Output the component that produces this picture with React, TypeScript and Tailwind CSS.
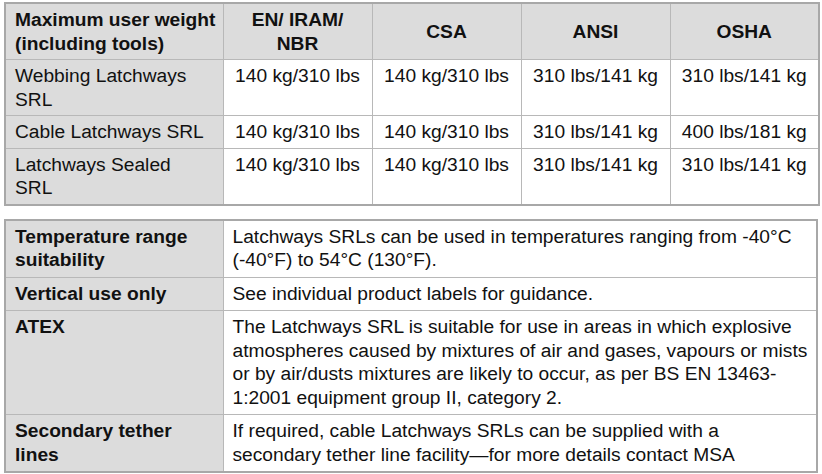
const weights = [
  { name: ["Webbing Latchways", "SRL"], v: ["140 kg/310 lbs", "140 kg/310 lbs", "310 lbs/141 kg", "310 lbs/141 kg"] },
  { name: ["Cable Latchways SRL"], v: ["140 kg/310 lbs", "140 kg/310 lbs", "310 lbs/141 kg", "400 lbs/181 kg"] },
  { name: ["Latchways Sealed", "SRL"], v: ["140 kg/310 lbs", "140 kg/310 lbs", "310 lbs/141 kg", "310 lbs/141 kg"] },
];

const specs = [
  {
    label: ["Temperature range", "suitability"],
    text: ["Latchways SRLs can be used in temperatures ranging from -40°C", "(-40°F) to 54°C (130°F)."],
  },
  { label: ["Vertical use only"], text: ["See individual product labels for guidance."] },
  {
    label: ["ATEX"],
    text: [
      "The Latchways SRL is suitable for use in areas in which explosive",
      "atmospheres caused by mixtures of air and gases, vapours or mists",
      "or by air/dusts mixtures are likely to occur, as per BS EN 13463-",
      "1:2001 equipment group II, category 2.",
    ],
  },
  {
    label: ["Secondary tether", "lines"],
    text: ["If required, cable Latchways SRLs can be supplied with a", "secondary tether line facility\u2014for more details contact MSA"],
  },
];

const Lines = ({ lines }: { lines: string[] }) => (
  <>
    {lines.map((l, i) => (
      <span key={i} className="block h-[23.5px] whitespace-nowrap">
        {l}
      </span>
    ))}
  </>
);

const cell = "border border-[#b8b8b8] px-[9px] pt-[4px] pb-[4px] align-top";
const cell2 = "border border-[#b8b8b8] px-[9px] pt-[4px] pb-[5px] align-top";

export default function App() {
  return (
    <div
      className="w-[822px] h-[474px] overflow-hidden bg-white pl-[4px] pt-[2px] text-[19.2px] leading-[23.5px] text-[#111111]"
      style={{ fontFamily: '"Liberation Sans", Arial, sans-serif' }}
    >
      <table className="border-collapse border-2 border-[#a8a8a8] table-fixed w-[814px]">
        <colgroup>
          <col className="w-[218px]" />
          <col className="w-[149px]" />
          <col className="w-[149px]" />
          <col className="w-[149px]" />
          <col className="w-[149px]" />
        </colgroup>
        <thead>
          <tr className="bg-[#dcdcdc] font-bold">
            <th className={cell + " text-left"}>
              <Lines lines={["Maximum user weight", "(including tools)"]} />
            </th>
            <th className={cell + " text-center"}>
              <Lines lines={["EN/ IRAM/", "NBR"]} />
            </th>
            <th className={cell + " text-center !align-middle"}>CSA</th>
            <th className={cell + " text-center !align-middle"}>ANSI</th>
            <th className={cell + " text-center !align-middle"}>OSHA</th>
          </tr>
        </thead>
        <tbody>
          {weights.map((r, i) => (
            <tr key={i}>
              <td className={cell + " bg-[#dcdcdc]"}>
                <Lines lines={r.name} />
              </td>
              {r.v.map((v, j) => (
                <td key={j} className={cell + " text-center"}>
                  <Lines lines={[v]} />
                </td>
              ))}
            </tr>
          ))}
        </tbody>
      </table>

      <table className="mt-[13px] border-collapse border-2 border-[#a8a8a8] table-fixed w-[814px]">
        <colgroup>
          <col className="w-[218px]" />
          <col />
        </colgroup>
        <tbody>
          {specs.map((r, i) => (
            <tr key={i}>
              <td className={cell2 + " bg-[#dcdcdc] font-bold"}>
                <Lines lines={r.label} />
              </td>
              <td className={cell2}>
                <Lines lines={r.text} />
              </td>
            </tr>
          ))}
        </tbody>
      </table>
    </div>
  );
}
